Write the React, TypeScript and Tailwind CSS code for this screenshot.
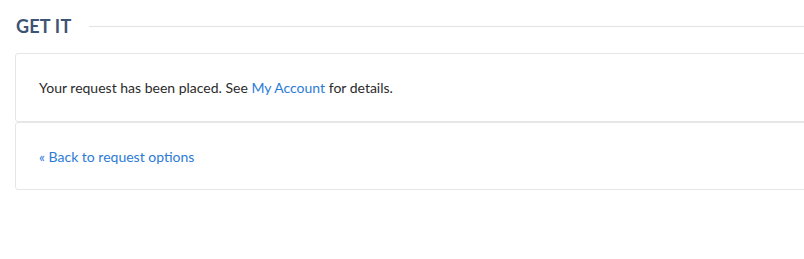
export default function App() {
  return (
    <div
      className="w-[804px] h-[259px] overflow-hidden bg-white"
      style={{ fontFamily: "Lato, 'Liberation Sans', sans-serif" }}
    >
      <div className="w-[830px] pl-[15px] pt-[15px]">
        {/* Heading */}
        <div className="flex items-center gap-[18px] h-[22px] pl-px">
          <h2 className="text-[18px] font-bold leading-none text-[#3d5473] tracking-[0.2px]">
            GET IT
          </h2>
          <div className="flex-1 h-px bg-[#e3e3e3]" />
        </div>

        {/* Panels */}
        <div className="mt-[16px]">
          <div className="h-[69px] border border-[#e6e6e6] rounded-[3px] flex items-center px-[23px] text-[14px] text-[#2b2b2b]">
            <p>
              Your request has been placed. See{" "}
              <a href="#" className="text-[#2b7bd6]">
                My Account
              </a>{" "}
              for details.
            </p>
          </div>
          <div className="h-[68px] border border-[#e6e6e6] rounded-[3px] flex items-center px-[23px] text-[14px]">
            <a href="#" className="text-[#2b7bd6]">
              « Back to request options
            </a>
          </div>
        </div>
      </div>
    </div>
  );
}
